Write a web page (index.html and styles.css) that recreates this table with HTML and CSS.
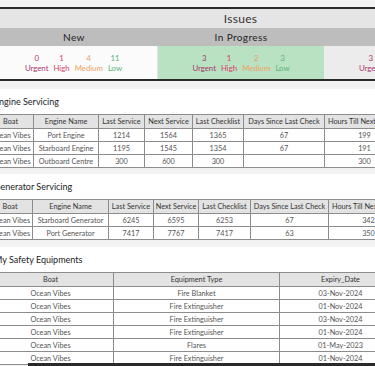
FILE: index.html
```html
<!DOCTYPE html>
<html>
<head>
<meta charset="utf-8">
<link rel="stylesheet" href="styles.css">
</head>
<body>
<div class="page">
  <section class="issues">
    <div class="issues-title">Issues</div>
    <div class="status-row">
      <div class="status">New</div>
      <div class="status">In Progress</div>
      <div class="status">Resolved</div>
    </div>
    <div class="counts-row">
      <div class="counts new">
        <div class="count urgent"><span>0</span><span>Urgent</span></div>
        <div class="count high"><span>1</span><span>High</span></div>
        <div class="count medium"><span>4</span><span>Medium</span></div>
        <div class="count low"><span>11</span><span>Low</span></div>
      </div>
      <div class="counts progress">
        <div class="count urgent"><span>3</span><span>Urgent</span></div>
        <div class="count high"><span>1</span><span>High</span></div>
        <div class="count medium"><span>2</span><span>Medium</span></div>
        <div class="count low"><span>3</span><span>Low</span></div>
      </div>
      <div class="counts resolved">
        <div class="count urgent"><span>3</span><span>Urgent</span></div>
        <div class="count high"><span>0</span><span>High</span></div>
        <div class="count medium"><span>1</span><span>Medium</span></div>
        <div class="count low"><span>2</span><span>Low</span></div>
      </div>
    </div>
  </section>

  <section class="card card-engine">
    <h2 class="card-title">Engine Servicing</h2>
    <table class="grid engine">
      <colgroup>
        <col style="width:46px"><col style="width:65px"><col style="width:46px"><col style="width:48px"><col style="width:51px"><col style="width:81px"><col style="width:80px">
      </colgroup>
      <thead>
        <tr><th>Boat</th><th>Engine Name</th><th>Last Service</th><th>Next Service</th><th>Last Checklist</th><th>Days Since Last Check</th><th>Hours Till Next Service</th></tr>
      </thead>
      <tbody>
        <tr><td>Ocean Vibes</td><td>Port Engine</td><td>1214</td><td>1564</td><td>1365</td><td>67</td><td>199</td></tr>
        <tr><td>Ocean Vibes</td><td>Starboard Engine</td><td>1195</td><td>1545</td><td>1354</td><td>67</td><td>191</td></tr>
        <tr><td>Ocean Vibes</td><td>Outboard Centre</td><td>300</td><td>600</td><td>300</td><td></td><td>300</td></tr>
      </tbody>
    </table>
  </section>

  <section class="card card-generator">
    <h2 class="card-title">Generator Servicing</h2>
    <table class="grid generator">
      <colgroup>
        <col style="width:45px"><col style="width:76px"><col style="width:45px"><col style="width:45px"><col style="width:52px"><col style="width:78px"><col style="width:80px">
      </colgroup>
      <thead>
        <tr><th>Boat</th><th>Engine Name</th><th>Last Service</th><th>Next Service</th><th>Last Checklist</th><th>Days Since Last Check</th><th>Hours Till Next Service</th></tr>
      </thead>
      <tbody>
        <tr><td>Ocean Vibes</td><td>Starboard Generator</td><td>6245</td><td>6595</td><td>6253</td><td>67</td><td>342</td></tr>
        <tr><td>Ocean Vibes</td><td>Port Generator</td><td>7417</td><td>7767</td><td>7417</td><td>63</td><td>350</td></tr>
      </tbody>
    </table>
  </section>

  <section class="card card-safety">
    <h2 class="card-title">My Safety Equipments</h2>
    <table class="grid safety">
      <colgroup>
        <col style="width:126px"><col style="width:166px"><col style="width:122px">
      </colgroup>
      <thead>
        <tr><th>Boat</th><th>Equipment Type</th><th>Expiry_Date</th></tr>
      </thead>
      <tbody>
        <tr><td>Ocean Vibes</td><td>Fire Blanket</td><td>03-Nov-2024</td></tr>
        <tr><td>Ocean Vibes</td><td>Fire Extinguisher</td><td>01-Nov-2024</td></tr>
        <tr><td>Ocean Vibes</td><td>Fire Extinguisher</td><td>03-Nov-2024</td></tr>
        <tr><td>Ocean Vibes</td><td>Fire Extinguisher</td><td>01-Nov-2024</td></tr>
        <tr><td>Ocean Vibes</td><td>Flares</td><td>01-May-2023</td></tr>
        <tr><td>Ocean Vibes</td><td>Fire Extinguisher</td><td>01-Nov-2024</td></tr>
      </tbody>
    </table>
  </section>
</div>
<div class="scroll-thumb"></div>
</body>
</html>
```

FILE: styles.css
```css
html, body {
  margin: 0;
  padding: 0;
  background: #f2f2f3;
  overflow: hidden;
  font-family: Lato, "Noto Sans", sans-serif;
  color: #333;
}

.page {
  width: 540px;
  margin-left: -13px;
  padding-top: 7px;
}

.issues {
  margin-left: 3px;
  border-top: 2px solid #2a2a2a;
  border-bottom: 2px solid #2a2a2a;
  background: #fafafa;
}

.issues-title {
  height: 19px;
  line-height: 19px;
  background: #e5e5e5;
  text-align: center;
  font-size: 12px;
  letter-spacing: 0.3px;
  color: #333;
  width: 501px;
}

.status-row {
  display: grid;
  grid-template-columns: 168px 166px 167px;
  height: 18px;
  background: #bdbdbd;
}

.status {
  text-align: center;
  line-height: 18px;
  font-size: 10px;
  letter-spacing: 0.4px;
  color: #222;
}

.counts-row {
  display: grid;
  grid-template-columns: 168px 166px 167px;
  height: 33px;
}

.counts {
  display: flex;
  justify-content: center;
  align-items: center;
  gap: 5px;
  font-size: 7.8px;
}

.counts.new {
  background: #fbfbfb;
  border-right: 1px solid #e2e2e2;
}

.counts.progress {
  background: #b8e2c2;
}

.counts.resolved {
  background: #ececec;
}

.count {
  display: flex;
  flex-direction: column;
  align-items: center;
  line-height: 10px;
}

.urgent { color: #a8356b; }
.high { color: #d6436a; }
.medium { color: #f0a064; }
.low { color: #57b57a; }

.card {
  background: #ffffff;
  margin-top: 8px;
  padding-top: 7px;
}

.card-generator {
  margin-top: 6px;
}

.card-safety {
  margin-top: 7px;
}

.card-title {
  margin: 0 0 6px 0;
  padding-left: 7px;
  font-size: 9px;
  line-height: 12px;
  font-weight: normal;
  color: #222;
}

.grid {
  border-collapse: collapse;
  table-layout: fixed;
  font-size: 7.3px;
  color: #555;
}

.grid th,
.grid td {
  border: 1px solid #8c8c8c;
  padding: 0;
  text-align: center;
  font-weight: normal;
  white-space: nowrap;
  overflow: hidden;
}

.grid th {
  height: 13px;
  background: #e3e3e3;
  color: #333;
}

.grid td {
  height: 12px;
}

.scroll-thumb {
  position: fixed;
  left: 28px;
  right: 0;
  bottom: 0;
  height: 3px;
  background: #2a2a2a;
}
```
